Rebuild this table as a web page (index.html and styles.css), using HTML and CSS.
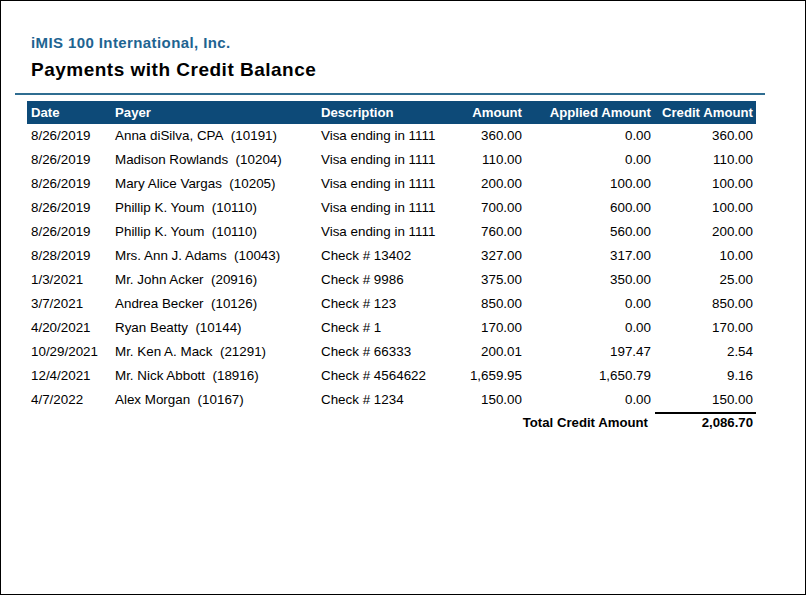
FILE: index.html
```html
<!DOCTYPE html>
<html lang="en">
<head>
<meta charset="utf-8">
<title>Payments with Credit Balance</title>
<link rel="stylesheet" href="styles.css">
</head>
<body>
<div class="page">
  <header class="report-head">
    <div class="company">iMIS 100 International, Inc.</div>
    <h1 class="title">Payments with Credit Balance</h1>
  </header>
  <div class="rule"></div>
  <table class="report">
    <colgroup>
      <col class="c-date">
      <col class="c-payer">
      <col class="c-desc">
      <col class="c-amt">
      <col class="c-applied">
      <col class="c-credit">
    </colgroup>
    <thead>
      <tr>
        <th>Date</th>
        <th>Payer</th>
        <th>Description</th>
        <th class="num">Amount</th>
        <th class="num">Applied Amount</th>
        <th class="num last">Credit Amount</th>
      </tr>
    </thead>
    <tbody>
      <tr><td>8/26/2019</td><td>Anna diSilva, CPA&nbsp; (10191)</td><td>Visa ending in 1111</td><td class="num">360.00</td><td class="num">0.00</td><td class="num last">360.00</td></tr>
      <tr><td>8/26/2019</td><td>Madison Rowlands&nbsp; (10204)</td><td>Visa ending in 1111</td><td class="num">110.00</td><td class="num">0.00</td><td class="num last">110.00</td></tr>
      <tr><td>8/26/2019</td><td>Mary Alice Vargas&nbsp; (10205)</td><td>Visa ending in 1111</td><td class="num">200.00</td><td class="num">100.00</td><td class="num last">100.00</td></tr>
      <tr><td>8/26/2019</td><td>Phillip K. Youm&nbsp; (10110)</td><td>Visa ending in 1111</td><td class="num">700.00</td><td class="num">600.00</td><td class="num last">100.00</td></tr>
      <tr><td>8/26/2019</td><td>Phillip K. Youm&nbsp; (10110)</td><td>Visa ending in 1111</td><td class="num">760.00</td><td class="num">560.00</td><td class="num last">200.00</td></tr>
      <tr><td>8/28/2019</td><td>Mrs. Ann J. Adams&nbsp; (10043)</td><td>Check # 13402</td><td class="num">327.00</td><td class="num">317.00</td><td class="num last">10.00</td></tr>
      <tr><td>1/3/2021</td><td>Mr. John Acker&nbsp; (20916)</td><td>Check # 9986</td><td class="num">375.00</td><td class="num">350.00</td><td class="num last">25.00</td></tr>
      <tr><td>3/7/2021</td><td>Andrea Becker&nbsp; (10126)</td><td>Check # 123</td><td class="num">850.00</td><td class="num">0.00</td><td class="num last">850.00</td></tr>
      <tr><td>4/20/2021</td><td>Ryan Beatty&nbsp; (10144)</td><td>Check # 1</td><td class="num">170.00</td><td class="num">0.00</td><td class="num last">170.00</td></tr>
      <tr><td>10/29/2021</td><td>Mr. Ken A. Mack&nbsp; (21291)</td><td>Check # 66333</td><td class="num">200.01</td><td class="num">197.47</td><td class="num last">2.54</td></tr>
      <tr><td>12/4/2021</td><td>Mr. Nick Abbott&nbsp; (18916)</td><td>Check # 4564622</td><td class="num">1,659.95</td><td class="num">1,650.79</td><td class="num last">9.16</td></tr>
      <tr><td>4/7/2022</td><td>Alex Morgan&nbsp; (10167)</td><td>Check # 1234</td><td class="num">150.00</td><td class="num">0.00</td><td class="num last">150.00</td></tr>
    </tbody>
    <tfoot>
      <tr>
        <td colspan="3"></td>
        <td colspan="2" class="num total-label">Total Credit Amount</td>
        <td class="num last total-value">2,086.70</td>
      </tr>
    </tfoot>
  </table>
</div>
</body>
</html>
```

FILE: styles.css
```css
html, body {
  margin: 0;
  padding: 0;
  background: #ffffff;
}

body {
  font-family: "Liberation Sans", Arial, Helvetica, sans-serif;
  color: #000000;
}

.page {
  box-sizing: border-box;
  width: 806px;
  height: 595px;
  border: 1px solid #000000;
  background: #ffffff;
}

.report-head {
  padding: 33px 0 0 30px;
}

.company {
  font-size: 15px;
  line-height: 18px;
  font-weight: bold;
  letter-spacing: 0.4px;
  color: #1e6491;
}

.title {
  margin: 7px 0 0 0;
  font-size: 19px;
  line-height: 22px;
  font-weight: bold;
  letter-spacing: 0.5px;
  color: #000000;
}

.rule {
  margin: 12px 0 0 14px;
  width: 750px;
  height: 2px;
  background: #2f6d91;
}

.report {
  margin: 6px 0 0 26px;
  width: 729px;
  border-collapse: collapse;
  table-layout: fixed;
  font-size: 13.4px;
}

.c-date { width: 84px; }
.c-payer { width: 206px; }
.c-desc { width: 130px; }
.c-amt { width: 79px; }
.c-applied { width: 129px; }
.c-credit { width: 101px; }

.report th {
  background: #0d4a78;
  color: #ffffff;
  font-weight: bold;
  font-size: 13.2px;
  text-align: left;
  height: 23px;
  line-height: 23px;
  padding: 0 4px;
  white-space: nowrap;
}

.report td {
  height: 24px;
  line-height: 24px;
  padding: 0 4px;
  white-space: nowrap;
}

.report .num {
  text-align: right;
}

.report .last {
  padding-right: 3px;
}

.report tfoot td {
  height: 18px;
  line-height: 18px;
  padding-top: 0;
  font-weight: bold;
  font-size: 13.2px;
}

.report tfoot tr {
  border-top: 1px solid transparent;
}

.report .total-label {
  padding-right: 7px;
}

.report .total-value {
  border-top: 2px solid #000000;
}
```
